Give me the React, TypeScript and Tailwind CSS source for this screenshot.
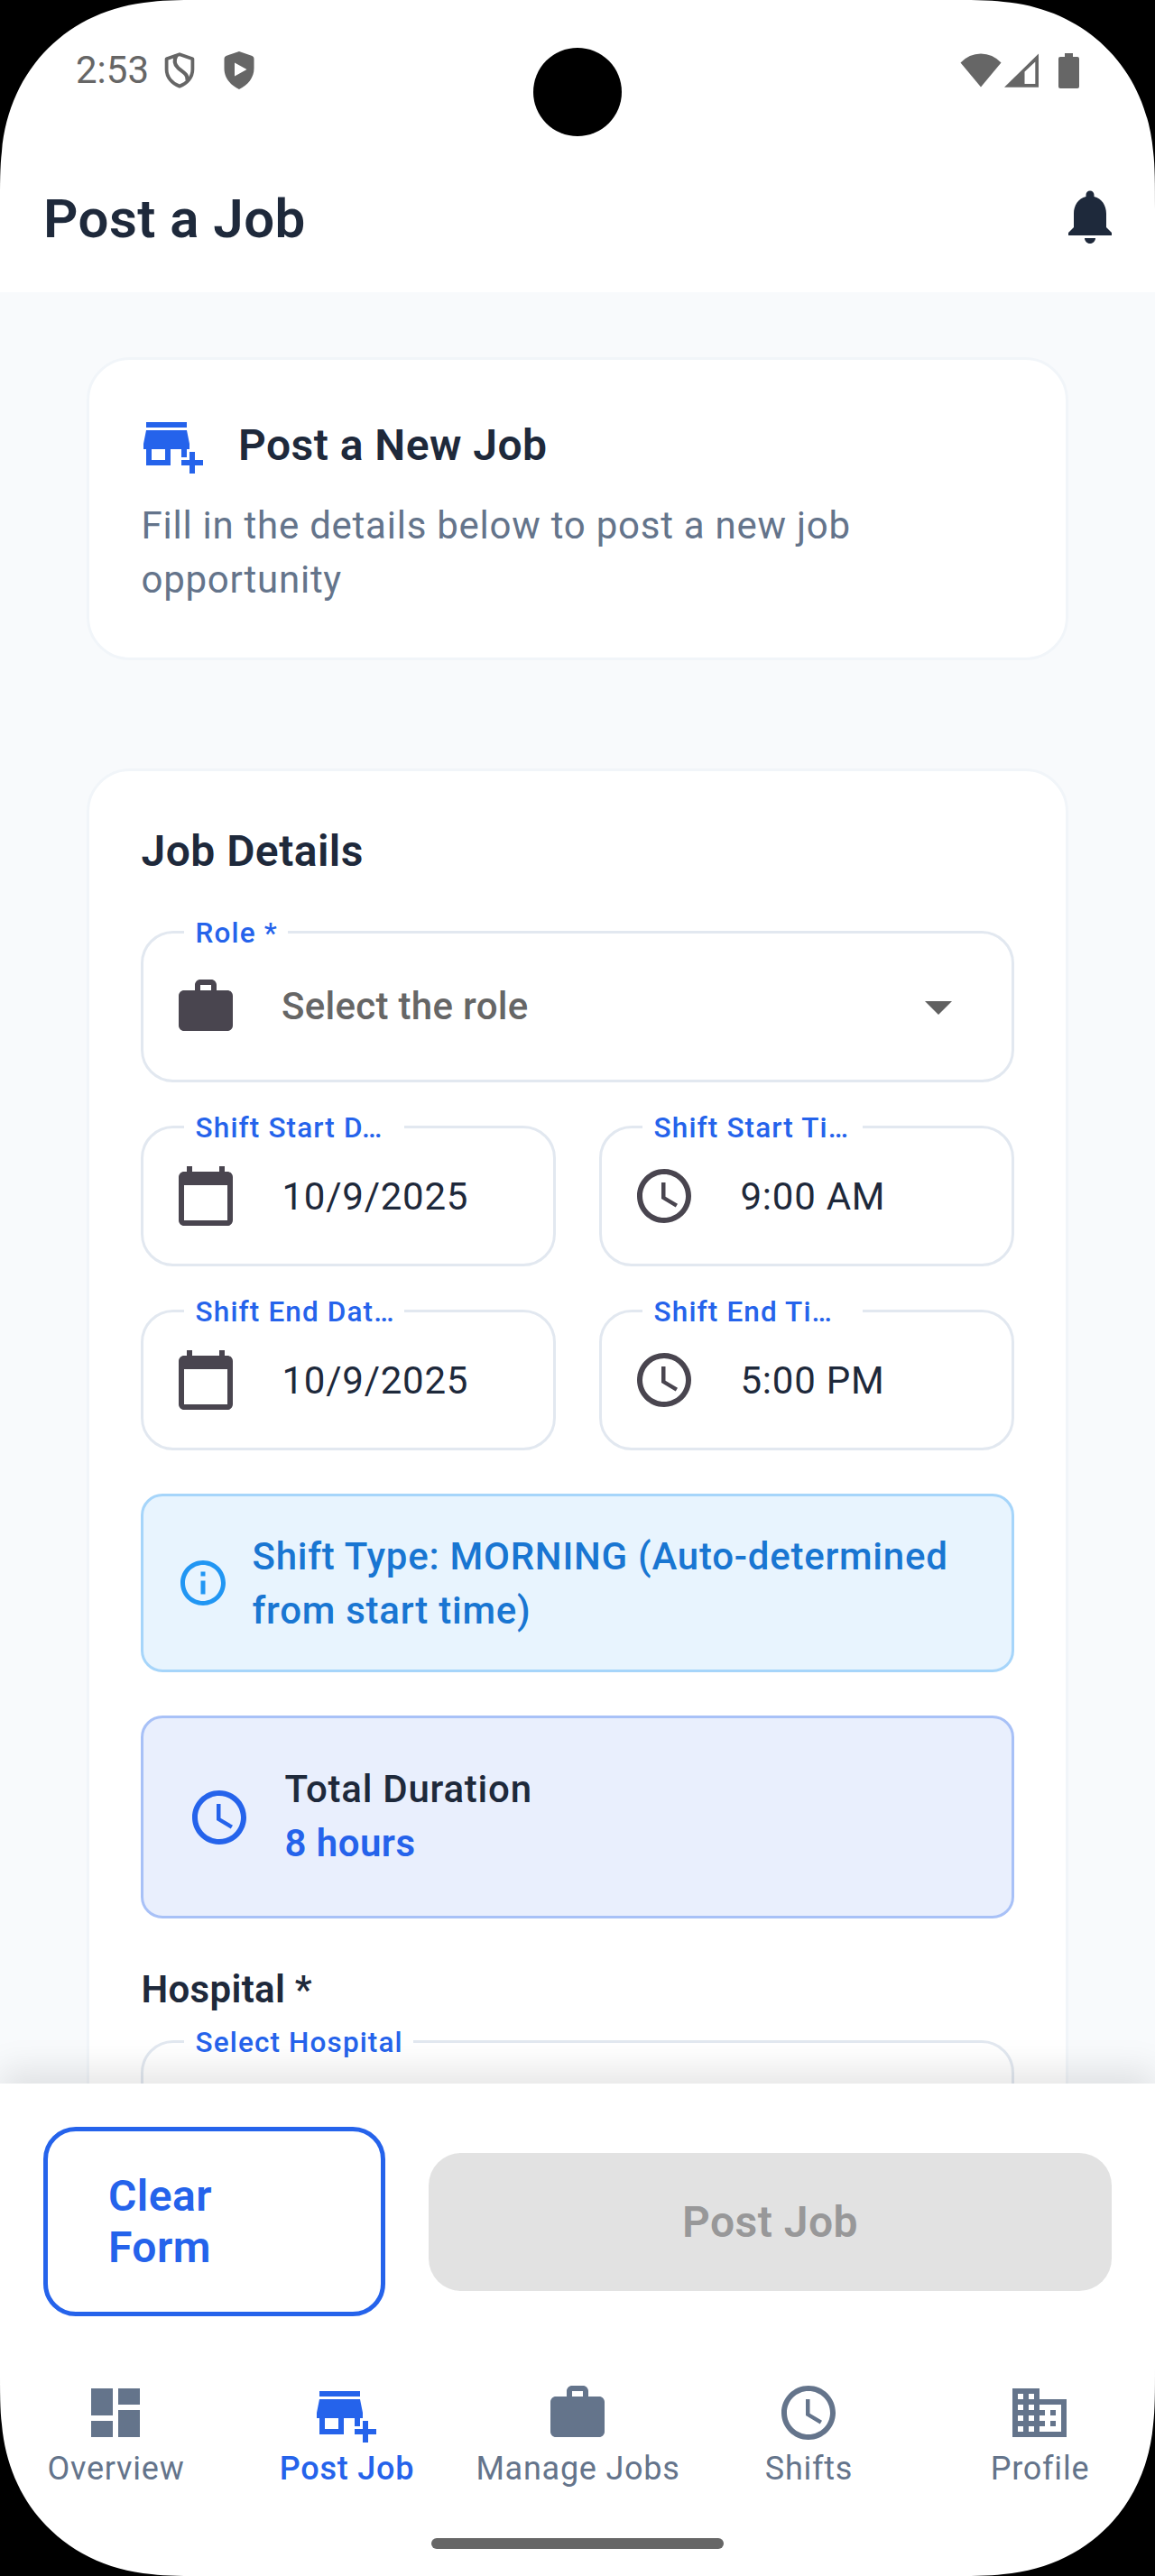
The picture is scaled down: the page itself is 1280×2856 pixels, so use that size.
import React from "react";

const ICONS = {
  bell: "M12 22c1.1 0 2-.9 2-2h-4c0 1.1.89 2 2 2zm6-6v-5c0-3.07-1.64-5.64-4.5-6.32V4c0-.83-.67-1.5-1.5-1.5s-1.5.67-1.5 1.5v.68C7.63 5.36 6 7.92 6 11v5l-2 2v1h16v-1l-2-2z",
  addBusiness:
    "M15 17h2v-3h1v-2l-1-5H2l-1 5v2h1v6h9v-6h4v3zm-6 1H4v-4h5v4zM2 4h15v2H2zM20 18v-3h-2v3h-3v2h3v3h2v-3h3v-2z",
  work: "M20 6h-4V4c0-1.11-.89-2-2-2h-4c-1.11 0-2 .89-2 2v2H4c-1.11 0-1.99.89-1.99 2L2 19c0 1.11.89 2 2 2h16c1.11 0 2-.89 2-2V8c0-1.11-.89-2-2-2zm-6 0h-4V4h4v2z",
  caret: "M7 10l5 5 5-5z",
  calendar:
    "M20 3h-1V1h-2v2H7V1H5v2H4c-1.1 0-2 .9-2 2v16c0 1.1.9 2 2 2h16c1.1 0 2-.9 2-2V5c0-1.1-.9-2-2-2zm0 18H4V8h16v13z",
  clock:
    "M11.99 2C6.47 2 2 6.48 2 12s4.47 10 9.99 10C17.52 22 22 17.52 22 12S17.52 2 11.99 2zM12 20c-4.42 0-8-3.58-8-8s3.58-8 8-8 8 3.58 8 8-3.58 8-8 8zm.5-13H11v6l5.25 3.15.75-1.23-4.5-2.67z",
  info: "M11 7h2v2h-2zm0 4h2v6h-2zm1-9C6.48 2 2 6.48 2 12s4.48 10 10 10 10-4.48 10-10S17.52 2 12 2zm0 18c-4.41 0-8-3.59-8-8s3.59-8 8-8 8 3.59 8 8-3.59 8-8 8z",
  dashboard: "M3 13h8V3H3v10zm0 8h8v-6H3v6zm10 0h8V11h-8v10zm0-18v6h8V3h-8z",
  business:
    "M12 7V3H2v18h20V7H12zM6 19H4v-2h2v2zm0-4H4v-2h2v2zm0-4H4V9h2v2zm0-4H4V5h2v2zm4 12H8v-2h2v2zm0-4H8v-2h2v2zm0-4H8V9h2v2zm0-4H8V5h2v2zm10 12h-8v-2h2v-2h-2v-2h2v-2h-2V9h8v10zm-2-8h-2v2h2v-2zm0 4h-2v2h2v-2z",
};

function Icon({ name, className = "size-[72px]" }: { name: keyof typeof ICONS; className?: string }) {
  return (
    <svg viewBox="0 0 24 24" fill="currentColor" className={`shrink-0 ${className}`}>
      <path d={ICONS[name]} />
    </svg>
  );
}

function Corner({ className }: { className: string }) {
  return (
    <svg viewBox="0 0 232 232" className={`pointer-events-none absolute size-[232px] ${className}`}>
      <path d="M0 0H232C204 0 184 0 168 2C76 10 10 76 2 168C0 184 0 204 0 232Z" fill="#000" />
    </svg>
  );
}

function StatusBar() {
  return (
    <div className="flex h-[156px] items-center pl-[84px] pr-[84px] text-[#666666]">
      <span className="w-[98px] text-[42px] leading-[48px]">2:53</span>
      <svg viewBox="0 0 34 40" className="h-[40px] w-[34px]" fill="none" stroke="currentColor">
        <path d="M17 2.2L31.4 7.2V19C31.4 27.5 25.5 34.5 17 37.6C8.5 34.5 2.6 27.5 2.6 19V7.2Z" strokeWidth="3.8" strokeLinejoin="round" />
        <path d="M13.5 3.5C10.500 9 11 13.500 15.500 17.500C20 21.500 26.500 24 25.500 31" strokeWidth="4.2" />
      </svg>
      <svg viewBox="0 0 34 42" className="ml-[32px] h-[42px] w-[34px]" fill="currentColor">
        <path
          fillRule="evenodd"
          d="M17 0L31.5 5Q33.5 6 33.5 8V19C33.5 29 27 37 17 42C7 37 .5 29 .5 19V8Q.5 6 2.5 5ZM12 12.5V27.5L25.5 20Z"
        />
      </svg>
      <svg viewBox="0 0 46 38" className="ml-auto h-[38px] w-[46px]" fill="currentColor">
        <path d="M23 37.5L.5 10.5Q10 .5 23 .5T45.5 10.5Z" />
      </svg>
      <svg viewBox="0 0 38 38" className="ml-[3px] h-[38px] w-[38px]" fill="currentColor">
        <path fillRule="evenodd" d="M38 .5V37.8H0ZM34.3 9.5L22.5 20.5V34H34.3Z" />
      </svg>
      <svg viewBox="0 0 23 39" className="ml-[22px] h-[39px] w-[23px]" fill="currentColor">
        <path d="M7 0H16V4H21Q23 4 23 6V37Q23 39 21 39H2Q0 39 0 37V6Q0 4 2 4H7Z" />
      </svg>
    </div>
  );
}

type FieldProps = {
  label: string;
  icon: keyof typeof ICONS;
  value: string;
  height?: string;
  labelWidth?: string;
  select?: boolean;
};

function Field({ label, icon, value, height = "h-[156px]", labelWidth = "", select = false }: FieldProps) {
  return (
    <div className={`relative flex flex-1 items-center rounded-[36px] border-[3px] border-[#e2e8f0] pl-[33px] ${height}`}>
      <span
        className={`absolute -top-[18px] left-[45px] whitespace-nowrap bg-white pl-[12.6px] pr-[11.4px] text-[31.5px] font-medium leading-[36px] tracking-[1.125px] text-[#2563eb] ${labelWidth}`}
      >
        {label}
      </span>
      <Icon name={icon} className="size-[72px] text-[#49454f]" />
      {select ? (
        <span className="ml-[48px] text-[42px] font-medium leading-[60px] tracking-[0.3px] text-[#666666]">{value}</span>
      ) : (
        <span className="ml-[48.5px] pt-[2px] text-[42px] leading-[60px] tracking-[0.75px] text-[#1e293b]">{value}</span>
      )}
      {select && <Icon name="caret" className="ml-auto mr-[45px] size-[72px] text-[#616161]" />}
    </div>
  );
}

const NAV: { icon: keyof typeof ICONS; label: string; active?: boolean }[] = [
  { icon: "dashboard", label: "Overview" },
  { icon: "addBusiness", label: "Post Job", active: true },
  { icon: "work", label: "Manage Jobs" },
  { icon: "clock", label: "Shifts" },
  { icon: "business", label: "Profile" },
];

export default function App() {
  return (
    <div className="relative flex h-[2856px] w-[1280px] flex-col overflow-hidden bg-white font-['Roboto',sans-serif]">
      <StatusBar />
      <header className="flex h-[168px] items-center justify-between pl-[48px] pr-[36px] text-[#1e293b]">
        <h1 className="pt-[6px] text-[60px] font-semibold leading-[72px] tracking-[0.45px]">Post a Job</h1>
        <Icon name="bell" />
      </header>

      <main className="h-[1986px] overflow-hidden bg-[#f8fafc] px-[96px] pt-[72px]">
        <section className="rounded-[48px] border-[3px] border-[#f1f5f9] bg-white p-[57px]">
          <div className="flex items-center gap-[36px]">
            <Icon name="addBusiness" className="size-[72px] text-[#2563eb]" />
            <h2 className="pt-[3px] text-[48px] font-semibold leading-[60px] tracking-[0.45px] text-[#1e293b]">
              Post a New Job
            </h2>
          </div>
          <p className="-mb-px mt-[25px] pl-[0.5px] text-[42px] leading-[60px] tracking-[0.75px] text-[#64748b]">
            Fill in the details below to post a new job
            <br />
            opportunity
          </p>
        </section>

        <section className="mt-[120px] rounded-[48px] border-[3px] border-[#f1f5f9] bg-white p-[57px]">
          <h2 className="pl-[0.5px] pt-[2px] text-[48px] font-semibold leading-[60px] tracking-[0.45px] text-[#1e293b]">
            Job Details
          </h2>
          <div className="mt-[58px] flex flex-col gap-[48px]">
            <div className="flex">
              <Field label="Role *" icon="work" value="Select the role" height="h-[168px]" select />
            </div>
            <div className="flex gap-[48px]">
              <Field label="Shift Start D…" icon="calendar" value="10/9/2025" labelWidth="w-[244px]" />
              <Field label="Shift Start Ti…" icon="clock" value="9:00 AM" labelWidth="w-[244px]" />
            </div>
            <div className="flex gap-[48px]">
              <Field label="Shift End Dat…" icon="calendar" value="10/9/2025" labelWidth="w-[244px]" />
              <Field label="Shift End Ti…" icon="clock" value="5:00 PM" labelWidth="w-[244px]" />
            </div>
            <div className="flex h-[198px] items-center gap-[24px] rounded-[24px] border-[3px] border-[#a6d5fa] bg-[#e8f4fe] px-[36px]">
              <Icon name="info" className="size-[60px] text-[#2196f3]" />
              <p className="whitespace-nowrap pl-[0.5px] pt-[2px] text-[42px] font-medium leading-[60px] tracking-[0.75px] text-[#1976d2]">
                Shift Type: MORNING (Auto-determined
                <br />
                from start time)
              </p>
            </div>
            <div className="flex h-[225px] items-center gap-[36px] rounded-[24px] border-[3px] border-[#a8c1f7] bg-[#e9effd] px-[48px]">
              <Icon name="clock" className="size-[72px] text-[#2563eb]" />
              <div className="pb-[2px] pl-[0.5px] text-[42px] leading-[60px]">
                <p className="font-medium tracking-[0.75px] text-[#1e293b]">Total Duration</p>
                <p className="font-semibold tracking-[0.45px] text-[#2563eb]">8 hours</p>
              </div>
            </div>
          </div>
          <h3 className="mt-[49px] pl-[0.5px] text-[42px] font-semibold leading-[60px] tracking-[0.3px] text-[#1e293b]">
            Hospital *
          </h3>
          <div className="mt-[26px] flex">
            <Field label="Select Hospital" icon="work" value="" height="h-[168px]" select />
          </div>
        </section>
      </main>

      <div className="relative flex h-[306px] items-center gap-[48px] bg-white px-[48px] shadow-[0_-15px_36px_rgba(0,0,0,0.1)]">
        <button className="h-[210px] w-[379px] rounded-[36px] border-[5px] border-[#2563eb] pl-[67px] text-left text-[48px] font-semibold leading-[57px] tracking-[0.45px] text-[#2563eb]">
          Clear
          <br />
          Form
        </button>
        <button className="h-[153px] flex-1 rounded-[36px] bg-[#e2e2e2] text-[48px] font-semibold leading-[57px] tracking-[0.45px] text-[#989899]">
          Post Job
        </button>
      </div>

      <nav className="relative flex h-[240px] flex-col items-center bg-white pt-[23px]">
        <div className="grid w-full grid-cols-5">
          {NAV.map(({ icon, label, active }) => (
            <a key={label} className={`flex flex-col items-center ${active ? "font-medium text-[#2563eb]" : "text-[#64748b]"}`}>
              <Icon name={icon} />
              <span className="mt-[3px] whitespace-nowrap pl-[1px] text-[36px] leading-[47px] tracking-[0.75px]">{label}</span>
            </a>
          ))}
        </div>
        <div className="mt-[53px] h-[12px] w-[324px] rounded-full bg-[#666666]" />
      </nav>

      <div className="absolute left-[591px] top-[53px] size-[98px] rounded-full bg-black" />
      <Corner className="left-0 top-0" />
      <Corner className="right-0 top-0 -scale-x-100" />
      <Corner className="bottom-0 left-0 -scale-y-100" />
      <Corner className="bottom-0 right-0 -scale-100" />
    </div>
  );
}
